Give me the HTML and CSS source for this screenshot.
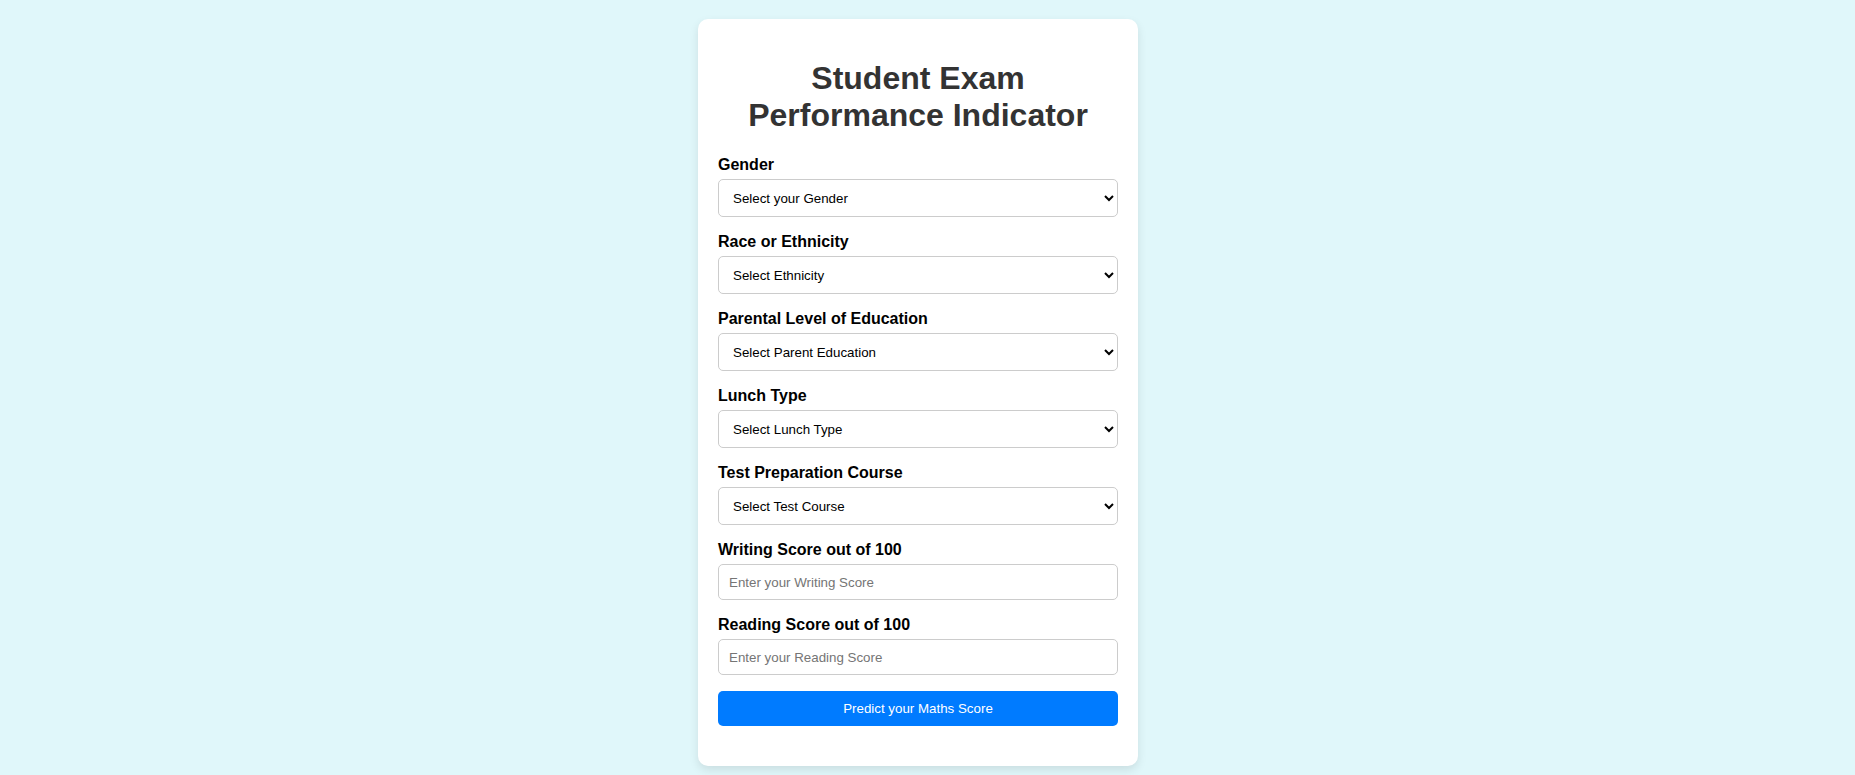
FILE: index.html
```html
<!DOCTYPE html>
<html lang="en">
<head>
<meta charset="utf-8">
<title>Student Exam Performance Indicator</title>
<link rel="stylesheet" href="styles.css">
</head>
<body>
<div class="page">
  <div class="card">
    <h1 class="title">Student Exam Performance Indicator</h1>
    <form class="form">
      <div class="group">
        <label class="label">Gender</label>
        <select class="field select">
          <option selected disabled>Select your Gender</option>
          <option>Male</option>
          <option>Female</option>
        </select>
      </div>
      <div class="group">
        <label class="label">Race or Ethnicity</label>
        <select class="field select">
          <option selected disabled>Select Ethnicity</option>
          <option>Group A</option>
        </select>
      </div>
      <div class="group">
        <label class="label">Parental Level of Education</label>
        <select class="field select">
          <option selected disabled>Select Parent Education</option>
          <option>Bachelor's degree</option>
        </select>
      </div>
      <div class="group">
        <label class="label">Lunch Type</label>
        <select class="field select">
          <option selected disabled>Select Lunch Type</option>
          <option>Standard</option>
        </select>
      </div>
      <div class="group">
        <label class="label">Test Preparation Course</label>
        <select class="field select">
          <option selected disabled>Select Test Course</option>
          <option>None</option>
        </select>
      </div>
      <div class="group">
        <label class="label">Writing Score out of 100</label>
        <input class="field input" type="number" placeholder="Enter your Writing Score">
      </div>
      <div class="group">
        <label class="label">Reading Score out of 100</label>
        <input class="field input" type="number" placeholder="Enter your Reading Score">
      </div>
      <button class="button" type="button">Predict your Maths Score</button>
    </form>
  </div>
</div>
</body>
</html>
```
FILE: styles.css
```css
html, body {
  margin: 0;
  padding: 0;
}
body {
  background: #e0f7fa;
  font-family: "Liberation Sans", Arial, sans-serif;
}
.page {
  display: flex;
  justify-content: center;
  padding: 19px 19px 40px 0;
}
.card {
  width: 400px;
  background: #ffffff;
  padding: 20px 20px 40px 20px;
  border-radius: 10px;
  box-shadow: 0 4px 10px rgba(0, 0, 0, 0.1);
}
.title {
  font-size: 32px;
  font-weight: bold;
  color: #333333;
  text-align: center;
  margin: 21.44px 0;
  line-height: 36.8px;
}
.form {
  display: flex;
  flex-direction: column;
}
.group {
  display: flex;
  flex-direction: column;
  margin-bottom: 15px;
}
.label {
  display: block;
  font-size: 16px;
  font-weight: bold;
  line-height: 19px;
  color: #000000;
  margin-bottom: 5px;
}
.field {
  box-sizing: border-box;
  width: 100%;
  margin: 0;
  border: 1px solid #cccccc;
  border-radius: 5px;
  background: #ffffff;
  font-family: "Liberation Sans", Arial, sans-serif;
  font-size: 13.33px;
  color: #000000;
}
.select {
  height: 38px;
  padding: 0 6px 0 10px;
}
.input {
  height: 36px;
  padding: 0 10px;
}
.input::placeholder {
  color: #757575;
}
.button {
  box-sizing: border-box;
  width: 100%;
  height: 35px;
  margin-top: 1px;
  border: none;
  border-radius: 5px;
  background: #007bff;
  color: #ffffff;
  font-family: "Liberation Sans", Arial, sans-serif;
  font-size: 13.33px;
  cursor: pointer;
}
```
